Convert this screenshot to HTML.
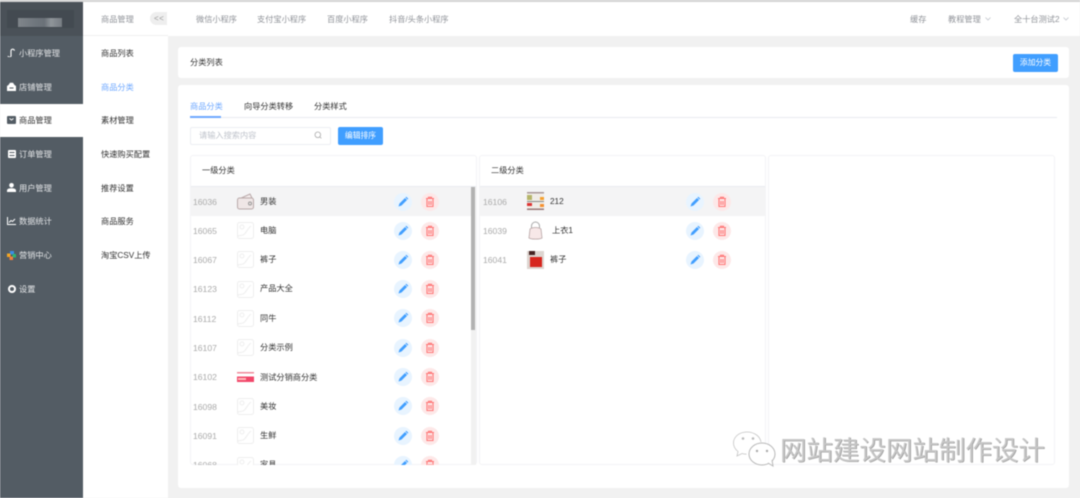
<!DOCTYPE html>
<html lang="zh"><head><meta charset="utf-8"><title>分类列表</title>
<style>
*{box-sizing:border-box}
html,body{margin:0;padding:0}
body{width:1080px;height:498px;overflow:hidden;background:#f1f1f1;font-family:"Liberation Sans","Noto Sans CJK SC",sans-serif;font-size:8.2px;color:#333}
#w{position:absolute;left:0;top:0;width:1080px;height:498px;overflow:hidden;filter:blur(.4px);background:#f1f1f1}
.a{position:absolute}
.t{position:absolute;white-space:nowrap;line-height:12px;height:12px}
svg{display:block}
.panel{position:absolute;top:155px;width:287px;height:310px;background:#fff;border:1px solid #f3f3f6;border-radius:3px;overflow:hidden}
.id{color:#aaa;font-size:8.6px}
.c{position:absolute;width:18px;height:18px;border-radius:50%}
.e{background:#e8f4ff}.d{background:#fde8e8}
</style></head><body><div id="w">
<svg width="0" height="0" style="position:absolute"><defs>
<symbol id="ed" viewBox="0 0 18 18"><path d="M4.500 13.500l1-3 5.500-5.500 2 2-5.500 5.500z" fill="#409eff"/><path d="M11.500 4.500l.8-.8 2 2-.8.8z" fill="#409eff"/></symbol>
<symbol id="de" viewBox="0 0 18 18"><path d="M5 5.500h8M7.500 5.500V4.300h3v1.200M6 6v7.500h6V6M8 8v4M10 8v4" fill="none" stroke="#f77" stroke-width="1.100"/></symbol>
<symbol id="ph" viewBox="0 0 17 17"><rect x=".5" y=".5" width="16" height="16" rx="2" fill="#fff" stroke="#eee"/><circle cx="5" cy="5" r="2" fill="none" stroke="#eee"/><path d="M1 14l5-1c3-1 4-6 8-9" fill="none" stroke="#eee"/></symbol>
</defs></svg>

<div class="a" style="left:0;top:0;width:1080px;height:2px;background:#d4d4d4"></div>

<!-- sidebar -->
<div class="a" style="left:0;top:2px;width:83px;height:496px;background:#535c64"></div>
<div class="a" style="left:0;top:2px;width:83px;height:34px;background:#4a5158"></div>
<div class="a" style="left:7px;top:10px;width:67px;height:18px;background:#434a51"></div>
<div class="a" style="left:18px;top:18px;width:44px;height:9px;background:linear-gradient(90deg,#80868b,#6f767d 40%,#6a7178 60%,#8f959a 75%,#767c82)"></div>
<div class="a" style="left:0;top:104px;width:83px;height:33px;background:#fff"></div>

<svg class="a" style="left:7px;top:48px" width="9" height="9" viewBox="0 0 9 9"><path d="M1 8a1.500 1.500 0 1 0 3-1V3a1.700 1.700 0 0 1 3.400-.3" fill="none" stroke="#fff" stroke-width="1.100"/></svg>
<div class="t" style="left:19px;top:48px;color:#e4e6e8">小程序管理</div>
<svg class="a" style="left:7px;top:82px" width="9" height="9" viewBox="0 0 9 9"><path d="M0 4l1.500-1L3 .8h3L7.500 3 9 4v5H0z" fill="#fff"/><rect x="2.500" y="5.500" width="4" height="1" fill="#535c64"/></svg>
<div class="t" style="left:19px;top:82px;color:#e4e6e8">店铺管理</div>
<svg class="a" style="left:7px;top:116px" width="9" height="8" viewBox="0 0 9 8"><rect width="9" height="8" rx="1" fill="#535c64"/><path d="M2.500 2.500l2 1.500 2-1.500" fill="none" stroke="#fff"/></svg>
<div class="t" style="left:19px;top:115px;color:#333">商品管理</div>
<svg class="a" style="left:8px;top:150px" width="8" height="8" viewBox="0 0 8 8"><rect width="8" height="8" rx="1" fill="#fff"/><path d="M1.500 2.500h5M1.500 5.500h5" stroke="#535c64"/></svg>
<div class="t" style="left:19px;top:149px;color:#e4e6e8">订单管理</div>
<svg class="a" style="left:7px;top:183px" width="9" height="9" viewBox="0 0 9 9"><circle cx="4.500" cy="2.300" r="2.300" fill="#fff"/><path d="M0 9V7.500C0 6 2 5.300 4.500 5.300S9 6 9 7.500V9z" fill="#fff"/></svg>
<div class="t" style="left:19px;top:183px;color:#e4e6e8">用户管理</div>
<svg class="a" style="left:7px;top:217px" width="9" height="8" viewBox="0 0 9 8"><path d="M.5 0v7.500H9M2 5.500l2-2 1.500 1L8 2" fill="none" stroke="#fff"/></svg>
<div class="t" style="left:19px;top:216px;color:#e4e6e8">数据统计</div>
<svg class="a" style="left:7px;top:251px" width="9" height="9" viewBox="0 0 9 9"><rect x="3" width="4" height="3.500" fill="#3a8ee6"/><rect y="2.500" width="3.500" height="3.500" fill="#f5a623"/><rect x="5.500" y="3" width="3.500" height="3.500" fill="#2bb673"/><rect x="2.500" y="5.500" width="3.500" height="3.500" fill="#f0803c"/></svg>
<div class="t" style="left:19px;top:250px;color:#e4e6e8">营销中心</div>
<svg class="a" style="left:8px;top:285px" width="8" height="8" viewBox="0 0 8 8"><circle cx="4" cy="4" r="3" fill="none" stroke="#fff" stroke-width="2"/></svg>
<div class="t" style="left:19px;top:284px;color:#e4e6e8">设置</div>

<!-- second sidebar -->
<div class="a" style="left:83px;top:2px;width:85px;height:496px;background:#fff"></div>
<div class="a" style="left:83px;top:35px;width:85px;height:1px;background:#f0f0f0"></div>
<div class="t" style="left:101px;top:14px;color:#909399">商品管理</div>
<div class="a" style="left:150px;top:12px;width:17px;height:13px;background:#eeeeee;border-radius:7px 0 0 7px;color:#999;font-size:8px;line-height:13px;padding-left:4px;letter-spacing:.5px">&lt;&lt;</div>
<div class="t" style="left:101px;top:48px;color:#333">商品列表</div>
<div class="t" style="left:101px;top:82px;color:#6ea8ff">商品分类</div>
<div class="t" style="left:101px;top:115px;color:#333">素材管理</div>
<div class="t" style="left:101px;top:149px;color:#333">快速购买配置</div>
<div class="t" style="left:101px;top:183px;color:#333">推荐设置</div>
<div class="t" style="left:101px;top:216px;color:#333">商品服务</div>
<div class="t" style="left:101px;top:250px;color:#333">淘宝CSV上传</div>

<!-- top bar -->
<div class="a" style="left:168px;top:2px;width:912px;height:34px;background:#fff"></div>
<div class="t" style="left:196px;top:14px;color:#909399">微信小程序</div>
<div class="t" style="left:257px;top:14px;color:#909399">支付宝小程序</div>
<div class="t" style="left:327px;top:14px;color:#909399">百度小程序</div>
<div class="t" style="left:389px;top:14px;color:#909399">抖音/头条小程序</div>
<div class="t" style="left:910px;top:14px;color:#909399">缓存</div>
<div class="t" style="left:948px;top:14px;color:#909399">教程管理</div>
<svg class="a" style="left:985px;top:17px" width="6" height="4" viewBox="0 0 6 4"><path d="M.5.500L3 3 5.500.500" fill="none" stroke="#c0c4cc" stroke-width=".8"/></svg>
<div class="t" style="left:1014px;top:14px;color:#909399">全十台测试2</div>
<svg class="a" style="left:1063px;top:17px" width="6" height="4" viewBox="0 0 6 4"><path d="M.5.500L3 3 5.500.500" fill="none" stroke="#c0c4cc" stroke-width=".8"/></svg>

<!-- card 1 -->
<div class="a" style="left:178px;top:47px;width:891px;height:31px;background:#fff;border-radius:3px"></div>
<div class="t" style="left:190px;top:57px;color:#333">分类列表</div>
<div class="a" style="left:1013px;top:54px;width:45px;height:18px;background:#409eff;border-radius:2px;color:#fff;text-align:center;line-height:18px;font-size:7.800px">添加分类</div>

<!-- card 2 -->
<div class="a" style="left:178px;top:85px;width:891px;height:403px;background:#fff;border-radius:3px"></div>
<div class="t" style="left:190px;top:101px;color:#6ea8ff">商品分类</div>
<div class="t" style="left:244px;top:101px;color:#333">向导分类转移</div>
<div class="t" style="left:314px;top:101px;color:#333">分类样式</div>
<div class="a" style="left:190px;top:117px;width:867px;height:1px;background:#e9ebf0"></div>
<div class="a" style="left:190px;top:116px;width:31px;height:2px;background:#6ea8ff"></div>
<div class="a" style="left:190px;top:127px;width:141px;height:18px;border:1px solid #eceef3;border-radius:2px"></div>
<div class="t" style="left:199px;top:130px;color:#c0c4cc">请输入搜索内容</div>
<svg class="a" style="left:314px;top:131px" width="8" height="8" viewBox="0 0 8 8"><circle cx="3.800" cy="3.800" r="2.800" fill="none" stroke="#aaa" stroke-width=".8"/><path d="M6 6l1.300 1.300" stroke="#aaa" stroke-width=".8"/></svg>
<div class="a" style="left:338px;top:127px;width:45px;height:18px;background:#409eff;border-radius:2px;color:#fff;text-align:center;line-height:18px;font-size:7.800px">编辑排序</div>

<!-- panel 1 -->
<div class="panel" style="left:190px"></div>
<div class="t" style="left:202px;top:165px;color:#333">一级分类</div>
<div class="a" style="left:191px;top:186px;width:285px;height:1px;background:#e9ebf0"></div>
<div class="a" style="left:191px;top:187px;width:280px;height:29px;background:#f4f4f5"></div>
<div class="a" style="left:471px;top:187px;width:5px;height:278px;background:#f1f1f1"></div>
<div class="a" style="left:471px;top:187px;width:4px;height:143px;background:#b2b2b2"></div>

<div class="t id" style="left:193px;top:196px">16036</div>
<svg class="a" style="left:237px;top:193px" width="18" height="17" viewBox="0 0 18 17"><path d="M2 6L13 1l2 4" fill="#f3ecec" stroke="#b9a9a9"/><rect x=".5" y="5" width="16" height="11" rx="2" fill="#efe6e6" stroke="#b9a9a9"/><circle cx="13" cy="10.500" r="1.500" fill="none" stroke="#999"/></svg>
<div class="t" style="left:260px;top:196px">男装</div>

<div class="t id" style="left:193px;top:225px">16065</div>
<svg class="a" style="left:237px;top:222px" width="17" height="17"><use href="#ph"/></svg>
<div class="t" style="left:260px;top:225px">电脑</div>

<div class="t id" style="left:193px;top:254px">16067</div>
<svg class="a" style="left:237px;top:251px" width="17" height="17"><use href="#ph"/></svg>
<div class="t" style="left:260px;top:254px">裤子</div>

<div class="t id" style="left:193px;top:283px">16123</div>
<svg class="a" style="left:237px;top:281px" width="17" height="17"><use href="#ph"/></svg>
<div class="t" style="left:260px;top:283px">产品大全</div>

<div class="t id" style="left:193px;top:313px">16112</div>
<svg class="a" style="left:237px;top:310px" width="17" height="17"><use href="#ph"/></svg>
<div class="t" style="left:260px;top:313px">同牛</div>

<div class="t id" style="left:193px;top:342px">16107</div>
<svg class="a" style="left:237px;top:339px" width="17" height="17"><use href="#ph"/></svg>
<div class="t" style="left:260px;top:342px">分类示例</div>

<div class="t id" style="left:193px;top:371px">16102</div>
<svg class="a" style="left:237px;top:371px" width="17" height="12" viewBox="0 0 17 12"><rect y="1" width="17" height="1.500" fill="#f08a9a"/><rect y="5.500" width="17" height="5.500" fill="#f2476a"/><rect x="1" y="7" width="8" height="2" fill="#fbb"/></svg>
<div class="t" style="left:260px;top:372px">测试分销商分类</div>

<div class="t id" style="left:193px;top:401px">16098</div>
<svg class="a" style="left:237px;top:398px" width="17" height="17"><use href="#ph"/></svg>
<div class="t" style="left:260px;top:401px">美妆</div>

<div class="t id" style="left:193px;top:430px">16091</div>
<svg class="a" style="left:237px;top:427px" width="17" height="17"><use href="#ph"/></svg>
<div class="t" style="left:260px;top:430px">生鲜</div>

<div class="a" style="left:191px;top:456px;width:280px;height:9px;overflow:hidden">
<div class="t id" style="left:2px;top:3px">16068</div>
<svg class="a" style="left:46px;top:1px" width="17" height="17"><use href="#ph"/></svg>
<div class="t" style="left:69px;top:3px">家具</div>
<div class="c e" style="left:203px;top:0"></div><svg class="a" style="left:203px;top:0" width="18" height="18"><use href="#ed"/></svg>
<div class="c d" style="left:230px;top:0"></div><svg class="a" style="left:230px;top:0" width="18" height="18"><use href="#de"/></svg>
</div>

<!-- action buttons panel 1 -->
<div class="c e" style="left:394px;top:193px"></div><svg class="a" style="left:394px;top:193px" width="18" height="18"><use href="#ed"/></svg>
<div class="c d" style="left:421px;top:193px"></div><svg class="a" style="left:421px;top:193px" width="18" height="18"><use href="#de"/></svg>
<div class="c e" style="left:394px;top:222px"></div><svg class="a" style="left:394px;top:222px" width="18" height="18"><use href="#ed"/></svg>
<div class="c d" style="left:421px;top:222px"></div><svg class="a" style="left:421px;top:222px" width="18" height="18"><use href="#de"/></svg>
<div class="c e" style="left:394px;top:251px"></div><svg class="a" style="left:394px;top:251px" width="18" height="18"><use href="#ed"/></svg>
<div class="c d" style="left:421px;top:251px"></div><svg class="a" style="left:421px;top:251px" width="18" height="18"><use href="#de"/></svg>
<div class="c e" style="left:394px;top:280px"></div><svg class="a" style="left:394px;top:280px" width="18" height="18"><use href="#ed"/></svg>
<div class="c d" style="left:421px;top:280px"></div><svg class="a" style="left:421px;top:280px" width="18" height="18"><use href="#de"/></svg>
<div class="c e" style="left:394px;top:309px"></div><svg class="a" style="left:394px;top:309px" width="18" height="18"><use href="#ed"/></svg>
<div class="c d" style="left:421px;top:309px"></div><svg class="a" style="left:421px;top:309px" width="18" height="18"><use href="#de"/></svg>
<div class="c e" style="left:394px;top:339px"></div><svg class="a" style="left:394px;top:339px" width="18" height="18"><use href="#ed"/></svg>
<div class="c d" style="left:421px;top:339px"></div><svg class="a" style="left:421px;top:339px" width="18" height="18"><use href="#de"/></svg>
<div class="c e" style="left:394px;top:368px"></div><svg class="a" style="left:394px;top:368px" width="18" height="18"><use href="#ed"/></svg>
<div class="c d" style="left:421px;top:368px"></div><svg class="a" style="left:421px;top:368px" width="18" height="18"><use href="#de"/></svg>
<div class="c e" style="left:394px;top:397px"></div><svg class="a" style="left:394px;top:397px" width="18" height="18"><use href="#ed"/></svg>
<div class="c d" style="left:421px;top:397px"></div><svg class="a" style="left:421px;top:397px" width="18" height="18"><use href="#de"/></svg>
<div class="c e" style="left:394px;top:427px"></div><svg class="a" style="left:394px;top:427px" width="18" height="18"><use href="#ed"/></svg>
<div class="c d" style="left:421px;top:427px"></div><svg class="a" style="left:421px;top:427px" width="18" height="18"><use href="#de"/></svg>

<!-- panel 2 -->
<div class="panel" style="left:479px"></div>
<div class="t" style="left:491px;top:165px;color:#333">二级分类</div>
<div class="a" style="left:480px;top:186px;width:285px;height:1px;background:#e9ebf0"></div>
<div class="a" style="left:480px;top:187px;width:285px;height:29px;background:#f4f4f5"></div>

<div class="t id" style="left:483px;top:196px">16106</div>
<svg class="a" style="left:527px;top:192px" width="17" height="18" viewBox="0 0 17 18"><rect width="17" height="18" fill="#f0ece6"/><rect y="0" width="17" height="1.500" fill="#a99"/><rect x="0" y="3" width="5" height="5" fill="#b5b56a"/><rect x="13" y="5" width="4" height="3" fill="#f5a030"/><rect y="9" width="17" height="1" fill="#888"/><rect x="0" y="11" width="5" height="3" fill="#d33"/><rect x="13" y="12" width="4" height="3" fill="#f59030"/><rect y="16.500" width="17" height="1.500" fill="#977"/></svg>
<div class="t" style="left:550px;top:196px">212</div>

<div class="t id" style="left:483px;top:225px">16039</div>
<svg class="a" style="left:528px;top:221px" width="15" height="19" viewBox="0 0 15 19"><path d="M3.500 8V5a4 4 0 0 1 8 0v3" fill="none" stroke="#aaa"/><path d="M2 8c3-2 8-2 11 0l1 9c-3 1.500-10 1.500-13 0z" fill="#f7e8e8" stroke="#b7a5a5" stroke-width=".8"/></svg>
<div class="t" style="left:552px;top:225px">上衣1</div>

<div class="t id" style="left:483px;top:254px">16041</div>
<svg class="a" style="left:527px;top:251px" width="17" height="18" viewBox="0 0 17 18"><rect width="17" height="18" fill="#ddd5d0"/><rect x="2" y="0" width="6" height="4" fill="#422"/><rect x="3" y="6" width="12" height="10" fill="#d6261e"/></svg>
<div class="t" style="left:550px;top:254px">裤子</div>

<div class="c e" style="left:686px;top:193px"></div><svg class="a" style="left:686px;top:193px" width="18" height="18"><use href="#ed"/></svg>
<div class="c d" style="left:713px;top:193px"></div><svg class="a" style="left:713px;top:193px" width="18" height="18"><use href="#de"/></svg>
<div class="c e" style="left:686px;top:222px"></div><svg class="a" style="left:686px;top:222px" width="18" height="18"><use href="#ed"/></svg>
<div class="c d" style="left:713px;top:222px"></div><svg class="a" style="left:713px;top:222px" width="18" height="18"><use href="#de"/></svg>
<div class="c e" style="left:686px;top:251px"></div><svg class="a" style="left:686px;top:251px" width="18" height="18"><use href="#ed"/></svg>
<div class="c d" style="left:713px;top:251px"></div><svg class="a" style="left:713px;top:251px" width="18" height="18"><use href="#de"/></svg>

<!-- panel 3 -->
<div class="panel" style="left:768px"></div>

<!-- watermark -->
<svg class="a" style="left:732px;top:430px" width="46" height="38" viewBox="0 0 46 38"><path d="M15 2C7 2 1.500 7 1.500 13c0 4 2 6.500 4.500 8.500L5 26l5-2.500c1.500.5 3 .7 4.500.7" fill="#fff" stroke="#c4c4c4" stroke-width=".8"/><path d="M15 2c7 0 13 4 14 10" fill="#fff" stroke="#c4c4c4" stroke-width=".8"/><ellipse cx="30" cy="24" rx="13" ry="11" fill="#fff" stroke="#b8b8b8"/><path d="M36 33l5 3-1-6" fill="#fff" stroke="#b8b8b8"/><circle cx="11" cy="8.500" r="1.300" fill="#bbb"/><circle cx="21" cy="8.500" r="1.300" fill="#bbb"/><circle cx="25" cy="21" r="1.200" fill="#aaa"/><circle cx="35" cy="21" r="1.200" fill="#aaa"/></svg>
<div class="a" style="left:780px;top:436px;font-size:26.500px;line-height:30px;white-space:nowrap;color:#c6c6c6;text-shadow:.7px .7px 0 #9a9a9a,-.7px -.7px 0 #fff;font-family:'Liberation Sans','Noto Sans CJK SC',sans-serif">网站建设网站制作设计</div>
</div></body></html>
